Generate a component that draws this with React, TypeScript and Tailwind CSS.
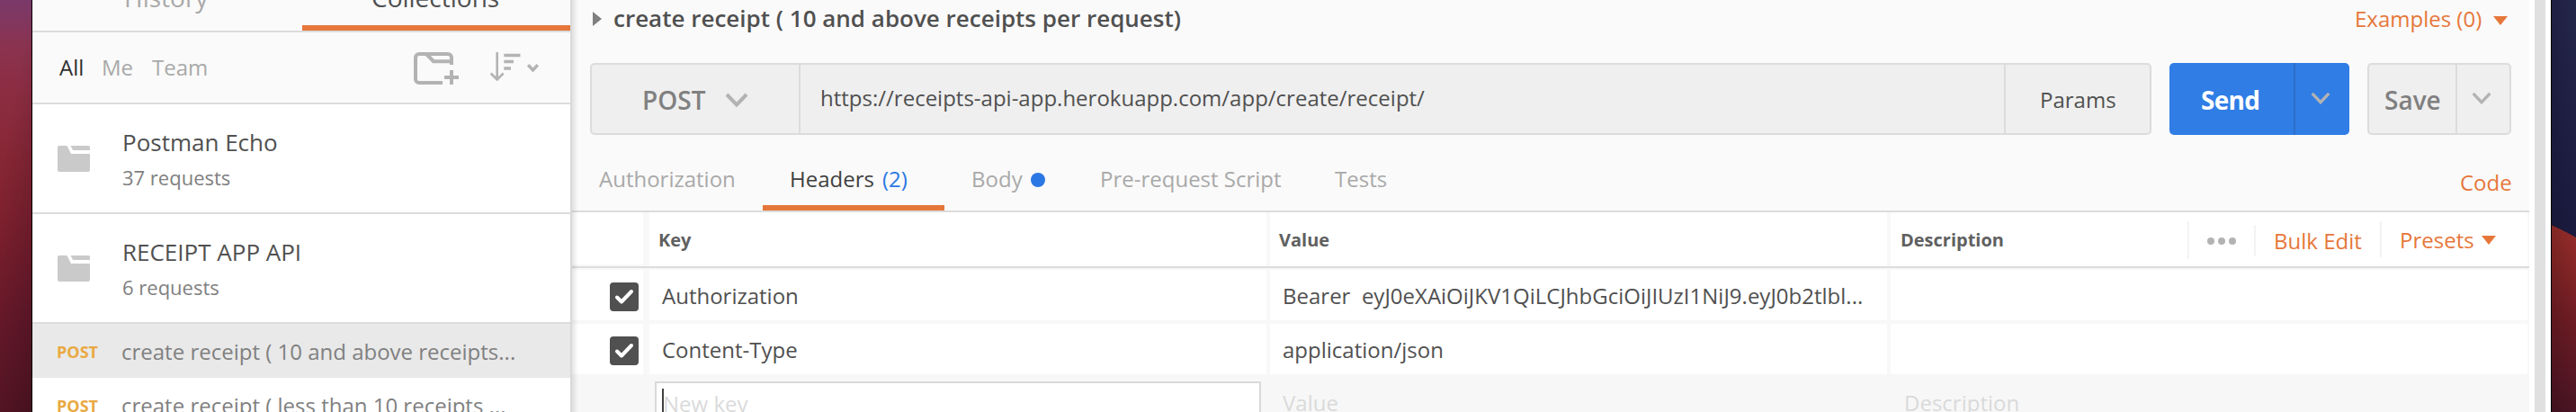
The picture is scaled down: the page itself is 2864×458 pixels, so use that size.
import React from "react";

const ChevronDown = ({ className, stroke }: { className: string; stroke: string }) => (
  <svg className={className} viewBox="0 0 26 16" fill="none">
    <path d="M2 2 L13 13.5 L24 2" stroke={stroke} strokeWidth="4" />
  </svg>
);

const Caret = ({ className }: { className: string }) => (
  <svg className={className} viewBox="0 0 16 10">
    <path d="M0 0H16L8 10Z" fill="#e6773a" />
  </svg>
);

const Folder = () => (
  <svg className="h-[29px] w-9" viewBox="0 0 36 29" fill="#cacaca">
    <path d="M1.5 0H10.5L15 9H36V27A2 2 0 0 1 34 29H2A2 2 0 0 1 0 27V1.5A1.5 1.5 0 0 1 1.5 0Z" />
    <path d="M14.5 0H34.5A1.5 1.5 0 0 1 36 1.5V5H17Z" />
  </svg>
);

const NewFolder = () => (
  <svg className="h-9 w-[50px]" viewBox="0 0 50 36" fill="none" stroke="#b3b3b3" strokeWidth="4">
    <path d="M32 34H6A4 4 0 0 1 2 30V6A4 4 0 0 1 6 2H38A4 4 0 0 1 42 6V14" />
    <path d="M14 2L22 10.2H42M42 20V36M34 28H50" />
  </svg>
);

const Sort = () => (
  <svg className="h-8 w-[34px]" viewBox="0 0 34 32" fill="none" stroke="#b3b3b3">
    <path d="M7.7 0V30M0.7 23.5L7.7 30.5L14.7 23.5" strokeWidth="2.6" />
    <path d="M15.3 3.5H33.5M15.3 10.5H26M15.3 18H23" strokeWidth="3.4" />
  </svg>
);

const Collection = ({ name, count, className }: { name: string; count: string; className: string }) => (
  <div className={`flex border-b-2 border-[#dcdcdc] bg-white pl-7 ${className}`}>
    <div className="w-[72px] pt-[46px]">
      <Folder />
    </div>
    <div className="flex flex-col pt-[24px]">
      <div className="h-[36px] text-[26px] leading-[36px] text-[#505050]">{name}</div>
      <div className="mt-[5px] h-[32px] text-[22px] leading-[32px] text-[#808080]">{count}</div>
    </div>
  </div>
);

const Request = ({ name, className }: { name: string; className: string }) => (
  <div className={`flex h-[60px] shrink-0 pl-[27px] ${className}`}>
    <div className="w-[72px] pt-[1px] text-[18px] font-bold leading-[60px] text-[#e9a942]">POST</div>
    <div className="whitespace-pre text-[24px] leading-[61px] text-[#808080]">{name}</div>
  </div>
);

const Sidebar = () => (
  <aside className="flex h-[458px] w-[600px] shrink-0 flex-col overflow-hidden border-r-2 border-[#d9d9d9] bg-white">
    <div className="flex h-9 shrink-0 border-b-2 border-[#dcdcdc] bg-[#fafafa] text-[28px] leading-[36px]">
      <div className="h-[34px] w-[300px]">
        <div className="-mt-[21px] ml-[102px] text-[#a9a9a9]">History</div>
      </div>
      <div className="h-[34px] w-[298px] border-b-[6px] border-[#e6773a]">
        <div className="-mt-[21px] ml-[77px] text-[#505050]">Collections</div>
      </div>
    </div>
    <div className="flex h-20 shrink-0 border-b-2 border-[#dcdcdc] bg-[#fafafa] pl-[30px] text-[24px] leading-[77px] text-[#a9a9a9]">
      <div className="w-[47px] text-[#303030]">All</div>
      <div className="w-[56px]">Me</div>
      <div className="w-[291px]">Team</div>
      <div className="w-[85px] pt-[22px]"><NewFolder /></div>
      <div className="w-[41px] pt-[22px]"><Sort /></div>
      <svg className="mt-[35px] h-[10px] w-[13px]" viewBox="0 0 13 10" fill="none">
        <path d="M1.2 1.2L6.5 7L11.8 1.2" stroke="#b3b3b3" strokeWidth="3.4" />
      </svg>
    </div>
    <Collection name="Postman Echo" count="37 requests" className="h-[122px] shrink-0" />
    <Collection name="RECEIPT APP API" count="6 requests" className="h-[122px] shrink-0" />
    <Request name="create receipt ( 10 and above receipts..." className="bg-[#e9e9e9]" />
    <Request name="create receipt ( less than 10 receipts ..." className="bg-white" />
  </aside>
);

const UrlBar = () => (
  <div className="flex h-20 pl-5">
    <div className="flex h-20 w-[1736px] rounded-[5px] border-2 border-[#dcdcdc] bg-[#efefef]">
      <div className="flex w-[232px] border-r-2 border-[#dcdcdc] pl-[56px]">
        <div className="w-[92px] text-[28px] font-semibold leading-[79px] text-[#808080]">POST</div>
        <ChevronDown className="mt-[31px] h-4 w-[26px]" stroke="#b3b3b3" />
      </div>
      <div className="w-[1340px] border-r-2 border-[#dcdcdc] pl-[22px] text-[24px] leading-[73px] text-[#505050]">
        https://receipts-api-app.herokuapp.com/app/create/receipt/
      </div>
      <div className="pl-[38px] text-[24px] leading-[78px] text-[#505050]">Params</div>
    </div>
    <div className="ml-5 flex h-20 w-[200px] rounded-[5px] bg-[#2f7de5]">
      <div className="w-[140px] border-r-2 border-[#2c6fc9] pl-[35px] text-[28px] font-bold leading-[83px] tracking-[-0.7px] text-white">Send</div>
      <ChevronDown className="ml-[17px] mt-[32px] h-[14px] w-[22px]" stroke="#b3b3b3" />
    </div>
    <div className="ml-5 flex h-20 w-[160px] rounded-[5px] border-2 border-[#dcdcdc] bg-[#efefef]">
      <div className="w-[98px] border-r-2 border-[#dcdcdc] pl-[17px] text-[28px] font-semibold leading-[79px] text-[#808080]">Save</div>
      <ChevronDown className="ml-[16px] mt-[30px] h-[14px] w-[22px]" stroke="#b3b3b3" />
    </div>
  </div>
);

const Tabs = () => (
  <div className="flex h-[86px] border-b-2 border-[#dcdcdc] text-[24px] leading-[82px] text-[#a9a9a9]">
    <div className="h-[84px] w-[212px] pl-[30px] pt-[9px] leading-[80px]">Authorization</div>
    <div className="flex h-[84px] w-[202px] border-b-[6px] border-[#e6773a] pl-[30px] pt-[9px] leading-[80px] text-[#404040]">
      <div className="w-[103px]">Headers</div>
      <div className="text-[#2b78e4]">(2)</div>
    </div>
    <div className="flex w-[173px] pl-[30px] pt-[9px] leading-[80px]">
      <div className="w-[66px]">Body</div>
      <div className="mt-[33px] h-4 w-4 rounded-full bg-[#2b78e4]" />
    </div>
    <div className="w-[261px] pt-[9px] leading-[80px]">Pre-request Script</div>
    <div className="w-[1251px] pt-[9px] leading-[80px]">Tests</div>
    <div className="pt-[13px] leading-[80px] text-[#e6773a]">Code</div>
  </div>
);

const Check = () => (
  <svg className="h-8 w-8" viewBox="0 0 32 32">
    <rect width="32" height="32" rx="4" fill="#505050" />
    <path d="M8 16.5L13 21.5L24 10" fill="none" stroke="#fff" strokeWidth="4" strokeLinecap="round" strokeLinejoin="round" />
  </svg>
);

const Row = ({ name, value }: { name: string; value: string }) => (
  <div className="mb-1 flex h-14 text-[24px] leading-[57px] text-[#505050]">
    <div className="mr-[7px] w-[79px] bg-white pl-[42px] pt-[14px]"><Check /></div>
    <div className="mr-1 w-[686px] bg-white pl-[14px]">{name}</div>
    <div className="mr-1 w-[686px] whitespace-pre bg-white pl-[14px]">{value}</div>
    <div className="w-[708px] bg-white" />
  </div>
);

const HeaderTable = () => (
  <div className="h-[222px] w-[2176px] bg-[#f8f8f8]">
    <div className="flex h-[62px] border-b-2 border-[#dcdcdc] text-[20px] font-bold leading-[61px] text-[#606060]">
      <div className="mr-[7px] h-[58px] w-[79px] bg-white" />
      <div className="mr-1 w-[686px] bg-white pl-[10px]">Key</div>
      <div className="mr-1 w-[686px] bg-white pl-[10px]">Value</div>
      <div className="flex w-[708px] bg-white pl-[11px] text-[24px] font-normal text-[#e6773a]">
        <div className="w-[319px] text-[20px] font-bold text-[#606060]">Description</div>
        <div className="mt-[10px] flex h-[42px] w-[74px] border-l-2 border-[#f3f3f3] pl-[20px] pt-[18px]">
          <div className="mr-1 h-2 w-2 rounded-full bg-[#b3b3b3]" />
          <div className="mr-1 h-2 w-2 rounded-full bg-[#b3b3b3]" />
          <div className="h-2 w-2 rounded-full bg-[#b3b3b3]" />
        </div>
        <div className="mt-[14px] flex h-[34px] w-[140px] items-center border-l-2 border-[#f3f3f3] pl-[20px]">Bulk Edit</div>
        <div className="mt-[10px] flex h-[40px] w-[160px] border-l-2 border-[#f3f3f3] pl-[20px]">
          <div className="w-[91px] leading-[42px]">Presets</div>
          <Caret className="mt-[16px] h-[10px] w-4" />
        </div>
      </div>
    </div>
    <div className="h-0.5" />
    <Row name="Authorization" value="Bearer  eyJ0eXAiOiJKV1QiLCJhbGciOiJIUzI1NiJ9.eyJ0b2tlbl..." />
    <Row name="Content-Type" value="application/json" />
    <div className="-mt-1 flex h-[42px] overflow-hidden bg-[#f7f7f7] text-[24px] text-[#dadada]">
      <div className="ml-[92px] mt-2 flex h-[60px] w-[674px] shrink-0 border-2 border-[#d9d9d9] bg-white pl-[6px]">
        <div className="mt-[6px] h-10 w-0.5 bg-[#404040]" />
        <div className="-ml-px leading-[46px]">New key</div>
      </div>
      <div className="ml-[24px] w-[691px] leading-[64px]">Value</div>
      <div className="leading-[64px]">Description</div>
    </div>
  </div>
);

export default function App() {
  return (
    <div className="flex h-[458px] w-[2864px] overflow-hidden bg-white font-['Open_Sans',sans-serif]">
      <div className="w-9 shrink-0 border-r border-black bg-[linear-gradient(100deg,transparent_30%,rgba(0,0,20,0.3)),linear-gradient(180deg,#79396a_0px,#8a3350_50px,#8c2d42_100px,#872634_180px,#80202e_260px,#701b2a_360px,#641825_458px)]" />
      <Sidebar />
      <main className="relative flex h-[458px] w-[2176px] shrink-0 flex-col bg-[#fafafa]">
        <div className="flex h-[70px] pl-[23px]">
          <svg className="mt-[13px] h-4 w-[10px]" viewBox="0 0 10 16"><path d="M0 0L10 8L0 16Z" fill="#808080" /></svg>
          <h1 className="ml-[13px] w-[1936px] text-[26px] font-semibold leading-[40px] text-[#505050]">
            create receipt ( 10 and above receipts per request)
          </h1>
          <div className="w-[154px] shrink-0 whitespace-nowrap text-[24px] leading-[42px] text-[#e6773a]">Examples (0)</div>
          <Caret className="mt-[18px] h-[10px] w-4" />
        </div>
        <UrlBar />
        <Tabs />
        <HeaderTable />
        <div className="pointer-events-none absolute inset-y-0 left-0 w-[7px] bg-gradient-to-r from-black/10 to-transparent" />
      </main>
      <div className="h-[458px] w-6 shrink-0 border-x-[6px] border-white bg-[#e0e0e0]" />
      <svg className="h-[458px] w-7 shrink-0" viewBox="0 0 28 458">
        <defs>
          <linearGradient id="sky" x1="0" y1="0" x2="0" y2="1">
            <stop offset="0" stopColor="#24264c" />
            <stop offset="0.55" stopColor="#1b1b40" />
          </linearGradient>
          <linearGradient id="hill" x1="0" y1="0" x2="0" y2="1">
            <stop offset="0" stopColor="#9a2e2a" />
            <stop offset="0.5" stopColor="#6f1c24" />
            <stop offset="1" stopColor="#4a1424" />
          </linearGradient>
          <linearGradient id="edge" x1="0" y1="0" x2="1" y2="0">
            <stop offset="0" stopColor="#000" stopOpacity="0.15" />
            <stop offset="1" stopColor="#000" stopOpacity="0" />
          </linearGradient>
        </defs>
        <rect width="28" height="458" fill="url(#sky)" />
        <path d="M0 250Q14 256 28 264V458H0Z" fill="url(#hill)" />
        <rect width="28" height="458" fill="url(#edge)" />
        <rect width="1" height="458" fill="#000" />
      </svg>
    </div>
  );
}
